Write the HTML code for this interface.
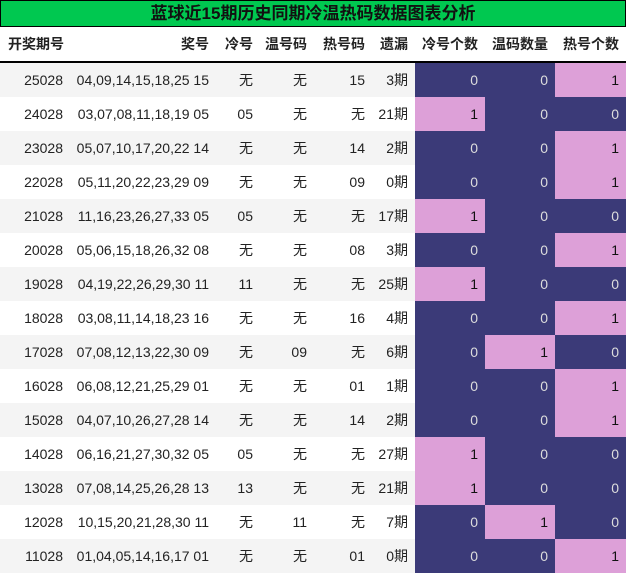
<!DOCTYPE html>
<html><head><meta charset="utf-8"><style>
body{margin:0;width:626px;height:574px;overflow:hidden;background:#fff;font-family:"Liberation Sans","Noto Sans CJK SC",sans-serif;}
.t{height:25px;background:#00c850;border:1px solid #000;text-align:center;font-weight:bold;font-size:17px;line-height:25px;color:#111;}
table{border-collapse:collapse;table-layout:fixed;width:626px;font-size:14px;}
td{padding:0 7px 0 0;text-align:right;height:34px;white-space:nowrap;color:#222;}
tr.h td{height:34px;font-weight:bold;border-bottom:2px solid #000;}
tr.h td:first-child{text-align:left;padding-left:8px;}
tr.g td{background:#f4f4f4}
td.n{background:#3b3a78 !important;color:#ddd}
td.p{background:#dda0d8 !important;color:#111}
</style></head><body>
<div class="t">蓝球近15期历史同期冷温热码数据图表分析</div>
<table>
<colgroup><col style="width:70px"><col style="width:146px"><col style="width:44px"><col style="width:54px"><col style="width:58px"><col style="width:43px"><col style="width:70px"><col style="width:70px"><col style="width:71px"></colgroup>
<tr class="h"><td>开奖期号</td><td>奖号</td><td>冷号</td><td>温号码</td><td>热号码</td><td>遗漏</td><td>冷号个数</td><td>温码数量</td><td>热号个数</td></tr>
<tr class="g"><td>25028</td><td>04,09,14,15,18,25 15</td><td>无</td><td>无</td><td>15</td><td>3期</td><td class="n">0</td><td class="n">0</td><td class="p">1</td></tr>
<tr><td>24028</td><td>03,07,08,11,18,19 05</td><td>05</td><td>无</td><td>无</td><td>21期</td><td class="p">1</td><td class="n">0</td><td class="n">0</td></tr>
<tr class="g"><td>23028</td><td>05,07,10,17,20,22 14</td><td>无</td><td>无</td><td>14</td><td>2期</td><td class="n">0</td><td class="n">0</td><td class="p">1</td></tr>
<tr><td>22028</td><td>05,11,20,22,23,29 09</td><td>无</td><td>无</td><td>09</td><td>0期</td><td class="n">0</td><td class="n">0</td><td class="p">1</td></tr>
<tr class="g"><td>21028</td><td>11,16,23,26,27,33 05</td><td>05</td><td>无</td><td>无</td><td>17期</td><td class="p">1</td><td class="n">0</td><td class="n">0</td></tr>
<tr><td>20028</td><td>05,06,15,18,26,32 08</td><td>无</td><td>无</td><td>08</td><td>3期</td><td class="n">0</td><td class="n">0</td><td class="p">1</td></tr>
<tr class="g"><td>19028</td><td>04,19,22,26,29,30 11</td><td>11</td><td>无</td><td>无</td><td>25期</td><td class="p">1</td><td class="n">0</td><td class="n">0</td></tr>
<tr><td>18028</td><td>03,08,11,14,18,23 16</td><td>无</td><td>无</td><td>16</td><td>4期</td><td class="n">0</td><td class="n">0</td><td class="p">1</td></tr>
<tr class="g"><td>17028</td><td>07,08,12,13,22,30 09</td><td>无</td><td>09</td><td>无</td><td>6期</td><td class="n">0</td><td class="p">1</td><td class="n">0</td></tr>
<tr><td>16028</td><td>06,08,12,21,25,29 01</td><td>无</td><td>无</td><td>01</td><td>1期</td><td class="n">0</td><td class="n">0</td><td class="p">1</td></tr>
<tr class="g"><td>15028</td><td>04,07,10,26,27,28 14</td><td>无</td><td>无</td><td>14</td><td>2期</td><td class="n">0</td><td class="n">0</td><td class="p">1</td></tr>
<tr><td>14028</td><td>06,16,21,27,30,32 05</td><td>05</td><td>无</td><td>无</td><td>27期</td><td class="p">1</td><td class="n">0</td><td class="n">0</td></tr>
<tr class="g"><td>13028</td><td>07,08,14,25,26,28 13</td><td>13</td><td>无</td><td>无</td><td>21期</td><td class="p">1</td><td class="n">0</td><td class="n">0</td></tr>
<tr><td>12028</td><td>10,15,20,21,28,30 11</td><td>无</td><td>11</td><td>无</td><td>7期</td><td class="n">0</td><td class="p">1</td><td class="n">0</td></tr>
<tr class="g"><td>11028</td><td>01,04,05,14,16,17 01</td><td>无</td><td>无</td><td>01</td><td>0期</td><td class="n">0</td><td class="n">0</td><td class="p">1</td></tr>
</table>
</body></html>
